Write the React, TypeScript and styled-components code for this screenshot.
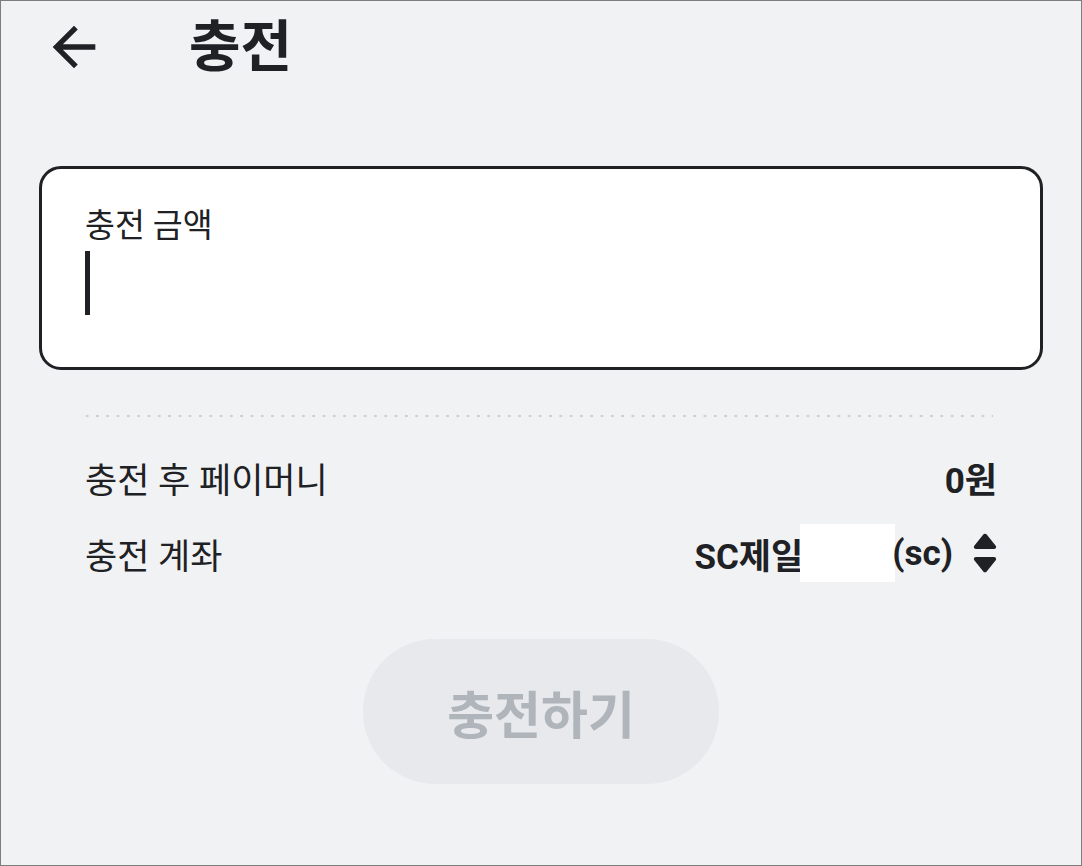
import React from "react";
import styled, { createGlobalStyle } from "styled-components";

const Global = createGlobalStyle`
  html, body { margin: 0; padding: 0; background: #f1f2f4; }
  body { font-family: Roboto, "Noto Sans CJK KR", sans-serif; color: #202124; }
  * { box-sizing: border-box; }
`;

const Screen = styled.div`
  width: 1082px;
  height: 866px;
  border: 1px solid #7d7d7d;
  background: #f1f2f4;
  display: flex;
  flex-direction: column;
  overflow: hidden;
`;

const Header = styled.header`
  height: 92px;
  display: flex;
  align-items: center;
  padding-left: 41px;
`;

const BackButton = styled.button`
  width: 64px;
  height: 64px;
  padding: 0;
  border: 0;
  background: none;
  display: flex;
  color: #202124;
  margin-right: 83px;
`;

const Title = styled.h1`
  margin: 0;
  font-family: Roboto, "Noto Sans CJK KR", sans-serif;
  font-size: 56px;
  font-weight: 700;
  line-height: 1;
  color: #202124;
`;

const Card = styled.div`
  margin: 73px 38px 0;
  height: 204px;
  background: #fff;
  border: 3px solid #202124;
  border-radius: 22px;
  padding: 37px 43px 0;
  display: flex;
  flex-direction: column;
`;

const Label = styled.div`
  font-size: 32.5px;
  line-height: 40px;
  font-weight: 400;
`;

const Cursor = styled.div`
  width: 5px;
  height: 64px;
  background: #202124;
  margin-top: 5px;
`;

const Dots = styled.div`
  margin: 44px 88px 0 84px;
  height: 4px;
  background-image: radial-gradient(circle, #cdd0d4 1.1px, transparent 1.6px);
  background-size: 10.3px 4px;
  background-position: -3px 0;
  background-repeat: repeat-x;
`;

const Rows = styled.div`
  margin: 38px 84px 0 84px;
  display: flex;
  flex-direction: column;
  gap: 34px;
`;

const Row = styled.div`
  height: 42px;
  display: flex;
  align-items: center;
  justify-content: space-between;
  font-size: 35px;
`;

const RowLabel = styled.span`
  font-weight: 400;
`;

const Value = styled.span`
  display: flex;
  align-items: center;
  font-weight: 700;
  font-size: 35px;
`;

const Redact = styled.span`
  display: inline-block;
  width: 95px;
  height: 58px;
  background: #fff;
  margin-left: -3px;
  margin-right: -3px;
`;

const Spinner = styled.svg`
  margin-left: 20px;
  width: 24px;
  height: 40px;
`;

const ButtonWrap = styled.div`
  margin-top: 65px;
  display: flex;
  justify-content: center;
`;

const ChargeButton = styled.button`
  width: 356px;
  height: 145px;
  border: 0;
  border-radius: 72px;
  background: #e7e9ec;
  color: #b0b5bb;
  font-family: Roboto, "Noto Sans CJK KR", sans-serif;
  font-size: 51px;
  font-weight: 700;
`;

export default function App() {
  return (
    <>
      <Global />
      <Screen>
        <Header>
          <BackButton aria-label="뒤로">
            <svg width="64" height="64" viewBox="0 0 24 24" fill="currentColor">
              <path d="M20 11H7.83l5.59-5.59L12 4l-8 8 8 8 1.41-1.41L7.83 13H20v-2z" />
            </svg>
          </BackButton>
          <Title>충전</Title>
        </Header>
        <Card>
          <Label>충전 금액</Label>
          <Cursor />
        </Card>
        <Dots />
        <Rows>
          <Row>
            <RowLabel>충전 후 페이머니</RowLabel>
            <Value>0원</Value>
          </Row>
          <Row>
            <RowLabel>충전 계좌</RowLabel>
            <Value>
              SC제일
              <Redact />
              (sc)
              <Spinner viewBox="0 0 24 40">
                <path d="M10.3 1.6a2 2 0 0 1 3.4 0l9 11.2c1 1.3.1 3.2-1.6 3.2H2.9c-1.7 0-2.6-1.9-1.6-3.2z" fill="#202124" />
                <path d="M10.3 38.4a2 2 0 0 0 3.4 0l9-11.2c1-1.3.1-3.2-1.6-3.2H2.9c-1.7 0-2.6 1.9-1.6 3.2z" fill="#202124" />
              </Spinner>
            </Value>
          </Row>
        </Rows>
        <ButtonWrap>
          <ChargeButton>충전하기</ChargeButton>
        </ButtonWrap>
      </Screen>
    </>
  );
}
